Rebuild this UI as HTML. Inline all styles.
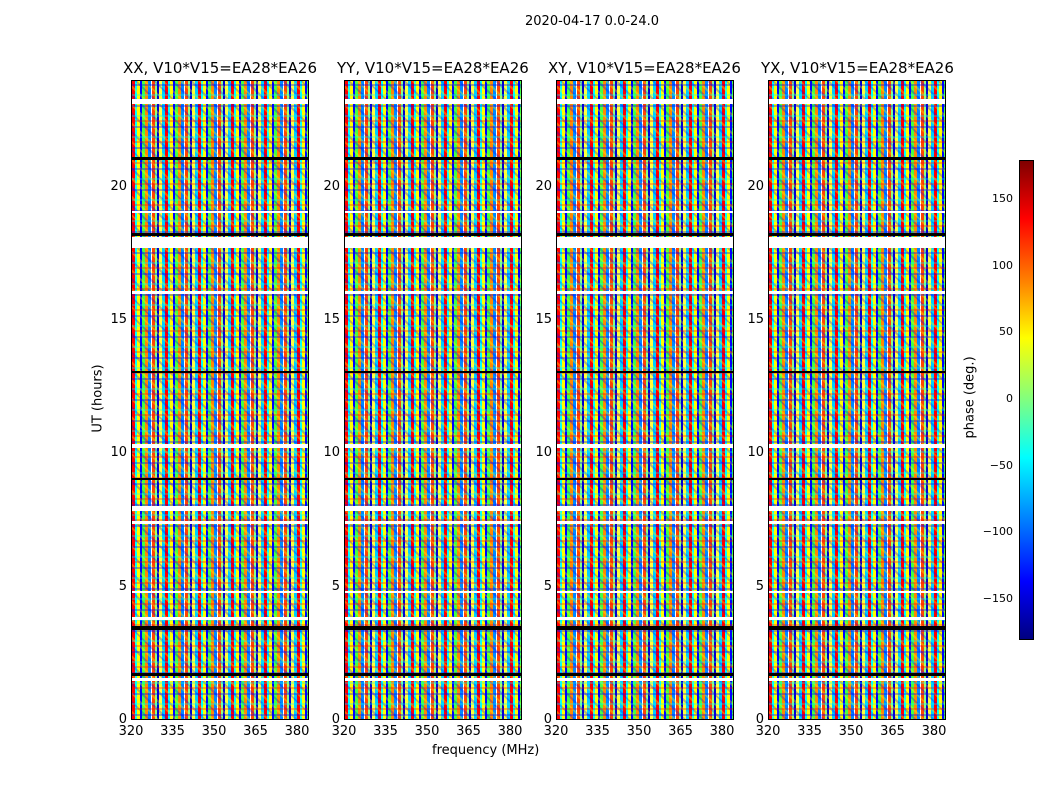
<!DOCTYPE html>
<html><head><meta charset="utf-8"><style>
body{margin:0;width:1050px;height:800px;background:#fff;position:relative;overflow:hidden;font-family:"DejaVu Sans","Liberation Sans",sans-serif;color:#000}
.t{position:absolute;white-space:nowrap}
.p{position:absolute;top:80px;height:640px;border:1px solid #000;box-sizing:border-box;overflow:hidden;
background:
repeating-linear-gradient(0deg,rgba(255,255,255,0) 0 3px,rgba(0,0,255,.35) 3px 5px,rgba(255,255,255,0) 5px 9px,rgba(255,0,0,.3) 9px 11px,rgba(255,255,255,0) 11px 14px,rgba(0,255,255,.3) 14px 16px,rgba(255,255,255,0) 16px 21px),
repeating-linear-gradient(45deg,rgba(255,255,0,0) 0 4px,rgba(255,255,0,.35) 4px 6px,rgba(0,0,255,0) 6px 11px,rgba(0,0,255,.3) 11px 13px),
repeating-linear-gradient(90deg,#f00 0 3px,#0ff 3px 5px,#ff0 5px 8px,#00f 8px 10px,#4f4 10px 13px,#f80 13px 16px,#08f 16px 19px,#fff 19px 20px,#f40 20px 23px,#8f8 23px 25px,#00c 25px 27px,#ff4 27px 30px,#0cf 30px 33px);}
.w{position:absolute;left:0;right:0;background:#fff}
.k{position:absolute;left:0;right:0;background:#000}
.yl{position:absolute;font-size:13px;text-align:right;width:30px}
.xl{position:absolute;font-size:13px;top:724px;width:30px;text-align:center}
.ti{position:absolute;top:59px;font-size:15px;white-space:nowrap}
.cl{position:absolute;font-size:11px;width:40px;text-align:right;left:973px}
</style></head><body>
<div class="t" style="left:525px;top:14px;font-size:13px">2020-04-17 0.0-24.0</div>
<div class="ti" style="left:123px">XX, V10*V15=EA28*EA26</div>
<div class="ti" style="left:337px">YY, V10*V15=EA28*EA26</div>
<div class="ti" style="left:548px">XY, V10*V15=EA28*EA26</div>
<div class="ti" style="left:761px">YX, V10*V15=EA28*EA26</div>

<div id="panels"></div>
<script>
var L=[131,344,556,768],html='';
var bands='<div class="w" style="top:18px;height:5px"></div><div class="k" style="top:76px;height:3px"></div><div class="w" style="top:156px;height:11px"></div><div class="k" style="top:152px;height:3px"></div><div class="w" style="top:363px;height:4px"></div><div class="k" style="top:290px;height:2px"></div><div class="w" style="top:425px;height:5px"></div><div class="w" style="top:440px;height:3px"></div><div class="k" style="top:545px;height:4px"></div><div class="w" style="top:536px;height:3px"></div><div class="k" style="top:592px;height:3px"></div><div class="w" style="top:597px;height:3px"></div><div class="w" style="top:210px;height:3px"></div><div class="w" style="top:130px;height:2px"></div><div class="k" style="top:397px;height:2px"></div><div class="w" style="top:510px;height:2px"></div>';
L.forEach(function(x){
html+='<div class="p" style="left:'+x+'px;width:178px">'+bands+'</div>';
[0,5,10,15,20].forEach(function(v){var y=720-v*26.67;html+='<div class="yl" style="left:'+(x-34)+'px;top:'+(y-8)+'px">'+v+'</div>';});
[320,335,350,365,380].forEach(function(v,i){html+='<div class="xl" style="left:'+(x+i*41.5-15)+'px">'+v+'</div>';});
});
document.getElementById('panels').innerHTML=html;
</script>
<div class="t" style="left:432px;top:743px;font-size:13px">frequency (MHz)</div>
<div class="t" style="left:60px;top:391px;font-size:13px;transform:rotate(-90deg);transform-origin:center;width:76px;text-align:center">UT (hours)</div>
<div style="position:absolute;left:1019px;top:160px;width:15px;height:480px;border:1px solid #000;box-sizing:border-box;background:linear-gradient(180deg,#800000 0%,#f00 12%,#ff8000 25%,#ff0 37%,#80ff80 50%,#0ff 62%,#0080ff 75%,#00f 88%,#000080 100%)"></div>
<div id="cb"></div>
<script>
var h='';[[150,199],[100,266],[50,332],[0,399],[-50,466],[-100,532],[-150,599]].forEach(function(a){h+='<div class="cl" style="top:'+(a[1]-7)+'px">'+(a[0]<0?'\u2212'+(-a[0]):a[0])+'</div>';});
document.getElementById('cb').innerHTML=h;
</script>
<div class="t" style="left:930px;top:391px;font-size:13px;transform:rotate(-90deg);width:80px;text-align:center">phase (deg.)</div>
</body></html>
